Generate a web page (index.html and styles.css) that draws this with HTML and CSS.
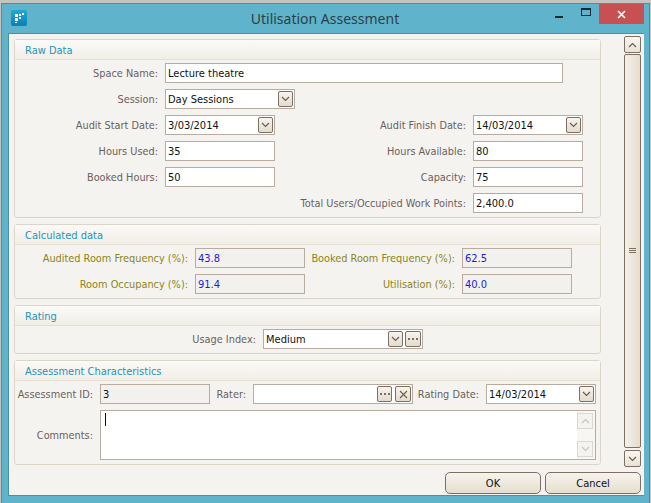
FILE: index.html
```html
<!DOCTYPE html>
<html>
<head>
	<meta charset="utf-8">
	<title>Utilisation Assessment</title>
	<link rel="stylesheet" href="styles.css">
</head>
<body>
<div class="window">
	<div class="titlebar">
		<svg class="app-icon" width="16" height="16" viewBox="0 0 16 16">
			<defs><linearGradient id="ic" x1="0" y1="0" x2="0" y2="1"><stop offset="0" stop-color="#22a8d6"/><stop offset="1" stop-color="#0a7fb5"/></linearGradient></defs>
			<rect width="16" height="16" rx="2" fill="url(#ic)"/>
			<rect x="4" y="4" width="3" height="3" fill="#fff"/>
			<rect x="8" y="4" width="2" height="2" fill="#fff"/>
			<rect x="11" y="3" width="2" height="2" fill="#fff"/>
			<rect x="4" y="8" width="3" height="3" fill="#fff"/>
			<rect x="8" y="7" width="2" height="2" fill="#fff"/>
			<rect x="4" y="12" width="2" height="1" fill="#fff"/>
		</svg>
		<div class="title">Utilisation Assessment</div>
		<div class="win-btn win-min"><span></span></div>
		<div class="win-btn win-max"><span></span></div>
		<div class="win-btn win-close">
			<svg width="9" height="9" viewBox="0 0 9 9"><path d="M1 1l7 7M8 1l-7 7" stroke="#fff" stroke-width="1.7" fill="none"/></svg>
		</div>
	</div>
	<div class="client">
		<div class="main">
			<div class="groups">
				<div class="group raw">
					<div class="group-title">Raw Data</div>
					<div class="group-body">
						<div class="row">
							<label class="lbl l-raw">Space Name:</label>
							<div class="field w-name">Lecture theatre</div>
						</div>
						<div class="row">
							<label class="lbl l-raw">Session:</label>
							<div class="field w-session">Day Sessions<span class="drop"><svg width="9" height="6" viewBox="0 0 9 6"><path d="M1 1l3.5 3.5L8 1" stroke="#6d5d50" stroke-width="1.2" fill="none"/></svg></span></div>
						</div>
						<div class="row">
							<label class="lbl l-raw">Audit Start Date:</label>
							<div class="field w-110">3/03/2014<span class="drop"><svg width="9" height="6" viewBox="0 0 9 6"><path d="M1 1l3.5 3.5L8 1" stroke="#6d5d50" stroke-width="1.2" fill="none"/></svg></span></div>
							<label class="lbl l-right">Audit Finish Date:</label>
							<div class="field w-110">14/03/2014<span class="drop"><svg width="9" height="6" viewBox="0 0 9 6"><path d="M1 1l3.5 3.5L8 1" stroke="#6d5d50" stroke-width="1.2" fill="none"/></svg></span></div>
						</div>
						<div class="row">
							<label class="lbl l-raw">Hours Used:</label>
							<div class="field w-110">35</div>
							<label class="lbl l-right">Hours Available:</label>
							<div class="field w-110">80</div>
						</div>
						<div class="row">
							<label class="lbl l-raw">Booked Hours:</label>
							<div class="field w-110">50</div>
							<label class="lbl l-right">Capacity:</label>
							<div class="field w-110">75</div>
						</div>
						<div class="row">
							<label class="lbl l-total">Total Users/Occupied Work Points:</label>
							<div class="field w-110">2,400.0</div>
						</div>
					</div>
				</div>
				<div class="group calc">
					<div class="group-title">Calculated data</div>
					<div class="group-body">
						<div class="row">
							<label class="lbl olive l-calc">Audited Room Frequency (%):</label>
							<div class="field w-110 readonly blue">43.8</div>
							<label class="lbl olive l-calc2">Booked Room Frequency (%):</label>
							<div class="field w-110 readonly blue">62.5</div>
						</div>
						<div class="row">
							<label class="lbl olive l-calc">Room Occupancy (%):</label>
							<div class="field w-110 readonly blue">91.4</div>
							<label class="lbl olive l-calc2">Utilisation (%):</label>
							<div class="field w-110 readonly blue">40.0</div>
						</div>
					</div>
				</div>
				<div class="group rating">
					<div class="group-title">Rating</div>
					<div class="group-body">
						<div class="row">
							<label class="lbl l-usage">Usage Index:</label>
							<div class="field w-usage">Medium<span class="drop d-usage"><svg width="9" height="6" viewBox="0 0 9 6"><path d="M1 1l3.5 3.5L8 1" stroke="#6d5d50" stroke-width="1.2" fill="none"/></svg></span><span class="drop d-dots"><svg width="10" height="2" viewBox="0 0 10 2"><path d="M0 0h2v2H0zM4 0h2v2H4zM8 0h2v2H8z" fill="#7d6e62"/></svg></span></div>
						</div>
					</div>
				</div>
				<div class="group assess">
					<div class="group-title">Assessment Characteristics</div>
					<div class="group-body">
						<div class="row">
							<label class="lbl l-assess">Assessment ID:</label>
							<div class="field w-110 readonly">3</div>
							<label class="lbl l-rater">Rater:</label>
							<div class="field w-rater"><span class="drop d-dots2"><svg width="10" height="2" viewBox="0 0 10 2"><path d="M0 0h2v2H0zM4 0h2v2H4zM8 0h2v2H8z" fill="#7d6e62"/></svg></span><span class="drop d-x"><svg width="9" height="9" viewBox="0 0 9 9"><path d="M1 1l7 7M8 1l-7 7" stroke="#6d5d50" stroke-width="1.1" fill="none"/></svg></span></div>
							<label class="lbl l-ratedate">Rating Date:</label>
							<div class="field w-110">14/03/2014<span class="drop"><svg width="9" height="6" viewBox="0 0 9 6"><path d="M1 1l3.5 3.5L8 1" stroke="#6d5d50" stroke-width="1.2" fill="none"/></svg></span></div>
						</div>
						<div class="row">
							<label class="lbl l-assess">Comments:</label>
							<div class="memo">
								<span class="caret"></span>
								<div class="memo-bar">
									<span class="memo-btn"><svg width="9" height="6" viewBox="0 0 9 6"><path d="M1 5l3.5-3.5L8 5" stroke="#c9c5bf" stroke-width="1.2" fill="none"/></svg></span>
									<span class="memo-btn"><svg width="9" height="6" viewBox="0 0 9 6"><path d="M1 1l3.5 3.5L8 1" stroke="#c9c5bf" stroke-width="1.2" fill="none"/></svg></span>
								</div>
							</div>
						</div>
					</div>
				</div>
			</div>
			<div class="scrollbar">
				<div class="sb-btn"><svg width="9" height="6" viewBox="0 0 9 6"><path d="M1 5l3.5-3.5L8 5" stroke="#6d5d50" stroke-width="1.2" fill="none"/></svg></div>
				<div class="sb-thumb"><span class="grip"></span></div>
				<div class="sb-btn"><svg width="9" height="6" viewBox="0 0 9 6"><path d="M1 1l3.5 3.5L8 1" stroke="#6d5d50" stroke-width="1.2" fill="none"/></svg></div>
			</div>
		</div>
		<div class="buttons">
			<button class="btn">OK</button>
			<button class="btn">Cancel</button>
		</div>
	</div>
</div>
</body>
</html>
```

FILE: styles.css
```css
* {
	box-sizing: border-box;
}

html, body {
	margin: 0;
	padding: 0;
	height: 100%;
}

body {
	background: #c4c4c1;
	padding: 3px 1px 0 1px;
	font-family: "DejaVu Sans Condensed", "Noto Sans", sans-serif;
	font-size: 11px;
	overflow: hidden;
}

.window {
	width: 649px;
	height: 500px;
	background: #5fb4cc;
	border: 1px solid #4b8fa3;
	border-bottom: 0;
	display: flex;
	flex-direction: column;
}

.titlebar {
	height: 29px;
	display: flex;
	align-items: flex-start;
	position: relative;
}

.app-icon {
	margin: 6px 0 0 9px;
}

.title {
	position: absolute;
	left: 0;
	width: 100%;
	top: 4px;
	padding-right: 1px;
	text-align: center;
	font-family: "Noto Sans", sans-serif;
	font-size: 14px;
	line-height: 22px;
	color: #2b3f48;
}

.win-btn {
	display: flex;
	align-items: center;
	justify-content: center;
}

.win-min {
	margin-left: auto;
	width: 26px;
	height: 20px;
}

.win-min span {
	width: 8px;
	height: 2px;
	background: #1b2a30;
	margin-top: 5px;
}

.win-max {
	width: 27px;
	height: 20px;
}

.win-max span {
	width: 10px;
	height: 8px;
	border: 1px solid #1b2a30;
	border-top-width: 2px;
	margin-top: -4px;
}

.win-close {
	width: 45px;
	height: 20px;
	margin-right: 5px;
	background: #c75050;
}

.client {
	margin: 0 5px 7px 6px;
	flex: 1;
	background: #f5f3ef;
	border: 1px solid #4b8fa3;
	border-width: 1px 0 1px 1px;
	padding: 5px 0 0 5px;
}

.main {
	display: flex;
	align-items: flex-start;
}

.groups {
	width: 587px;
	display: flex;
	flex-direction: column;
	gap: 6px;
}

.group {
	border: 1px solid #dcd6ca;
	border-radius: 3px;
}

.group-title {
	height: 20px;
	padding: 1px 0 0 10px;
	line-height: 19px;
	color: #1d94bb;
	background: linear-gradient(#fbfaf7, #f1eee7);
	border-bottom: 1px solid #e6e0d2;
}

.group-body {
	padding: 3px 0 4px 0;
	display: flex;
	flex-direction: column;
	gap: 6px;
}

.row {
	display: flex;
	align-items: center;
}

.lbl {
	display: block;
	text-align: right;
	padding-right: 7px;
	font-size: 10.85px;
	color: #6b5f5c;
	white-space: nowrap;
}

.olive {
	color: #8c8418;
}

.l-raw { width: 150px; }
.l-right { width: 198px; }
.l-total { width: 458px; }
.l-calc { width: 180px; }
.l-calc2 { width: 157px; }
.l-usage { width: 248px; }
.l-assess { width: 85px; }
.l-rater { width: 43px; }
.l-ratedate { width: 73px; }

.field {
	height: 20px;
	padding: 1px 0 0 2px;
	line-height: 18px;
	background: #fff;
	border: 1px solid #b8aca0;
	color: #111;
	position: relative;
	white-space: nowrap;
}

.readonly {
	background: #f3f1ed;
}

.blue {
	color: #1a1ae6;
}

.w-name { width: 398px; }
.w-session { width: 130px; }
.w-110 { width: 110px; }
.w-usage { width: 160px; }
.w-rater { width: 160px; }

.drop {
	position: absolute;
	top: 1px;
	right: 1px;
	width: 15px;
	height: 16px;
	border: 1px solid #7f6f62;
	border-radius: 2px;
	background: linear-gradient(#f7f4ee, #e3dccd);
	display: flex;
	align-items: center;
	justify-content: center;
}

.d-usage { right: 19px; }
.d-dots { right: 1px; width: 16px; }
.d-dots2 { right: 20px; }
.d-x { right: 1px; width: 16px; }

.memo {
	width: 496px;
	height: 50px;
	background: #fff;
	border: 1px solid #b8aca0;
	padding-left: 4px;
	display: flex;
	justify-content: space-between;
}

.caret {
	width: 1px;
	height: 13px;
	margin-top: 2px;
	background: #111;
}

.memo-bar {
	width: 18px;
	display: flex;
	flex-direction: column;
	justify-content: space-between;
	background: #f7f6f3;
	padding: 2px 2px 2px 0;
}

.memo-btn {
	height: 16px;
	border: 1px solid #dcd8d0;
	background: #f5f3ef;
	display: flex;
	align-items: center;
	justify-content: center;
}

.scrollbar {
	margin: -3px 0 0 23px;
	width: 17px;
	display: flex;
	flex-direction: column;
	gap: 1px;
}

.sb-btn {
	height: 17px;
	border: 1px solid #7f6f62;
	border-radius: 2px;
	background: linear-gradient(#f9f7f2, #e8e2d5);
	display: flex;
	align-items: center;
	justify-content: center;
}

.sb-thumb {
	height: 394px;
	margin-bottom: 1px;
	border: 1px solid #7f6f62;
	border-radius: 2px;
	background: linear-gradient(90deg, #f4f0e8, #e5ddcd);
	display: flex;
	align-items: center;
	justify-content: center;
}

.grip {
	width: 7px;
	height: 5px;
	margin-top: -2px;
	border-top: 1px solid #7f6f62;
	border-bottom: 1px solid #7f6f62;
	background: linear-gradient(#7f6f62, #7f6f62) center / 100% 1px no-repeat;
}

.buttons {
	display: flex;
	justify-content: flex-end;
	gap: 4px;
	margin-top: 5px;
	padding-right: 3px;
}

.btn {
	width: 96px;
	height: 22px;
	border: 1px solid #7f6f62;
	border-radius: 5px;
	background: linear-gradient(#f7f4ee, #e5dece);
	font-family: inherit;
	font-size: 11px;
	color: #111;
	padding: 0;
}
```
